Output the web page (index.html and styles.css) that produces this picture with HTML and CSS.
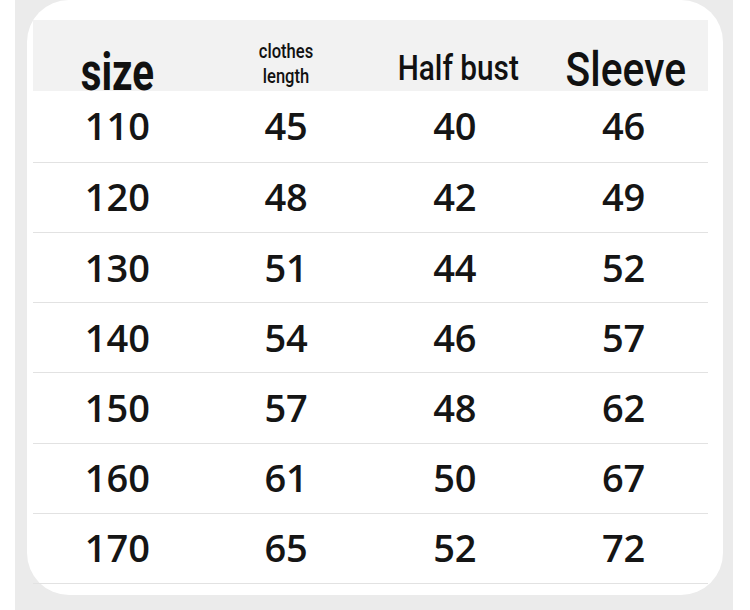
FILE: index.html
```html
<!DOCTYPE html>
<html lang="en">
<head>
<meta charset="utf-8">
<title>Size chart</title>
<link rel="stylesheet" href="styles.css">
</head>
<body>
<div class="panel">
  <div class="card">
    <div class="table">
      <div class="head">
        <div class="hcell hcell-size"><span class="cond bold">size</span></div>
        <div class="hcell hcell-length"><span class="cond med small">clothes<br>length</span></div>
        <div class="hcell hcell-bust"><span class="cond med mid">Half bust</span></div>
        <div class="hcell hcell-sleeve"><span class="cond med big">Sleeve</span></div>
      </div>
      <div class="row"><div>110</div><div>45</div><div>40</div><div>46</div></div>
      <div class="row"><div>120</div><div>48</div><div>42</div><div>49</div></div>
      <div class="row"><div>130</div><div>51</div><div>44</div><div>52</div></div>
      <div class="row"><div>140</div><div>54</div><div>46</div><div>57</div></div>
      <div class="row"><div>150</div><div>57</div><div>48</div><div>62</div></div>
      <div class="row"><div>160</div><div>61</div><div>50</div><div>67</div></div>
      <div class="row"><div>170</div><div>65</div><div>52</div><div>72</div></div>
    </div>
  </div>
</div>
</body>
</html>
```

FILE: styles.css
```css
* { box-sizing: border-box; }
html, body { margin: 0; padding: 0; background: #ffffff; }
body { width: 750px; height: 610px; overflow: hidden; }

.panel {
  margin-left: 15px;
  width: 718px;
  height: 610px;
  background: #ebebeb;
  padding: 0 10px 15px 12px;
}

.card {
  width: 696px;
  height: 595px;
  background: #ffffff;
  border-radius: 42px;
  padding: 20px 15px 0 6px;
}

.table { width: 675px; }

.head {
  height: 71px;
  background: #f2f2f2;
  display: grid;
  grid-template-columns: repeat(4, 1fr);
}

.hcell {
  display: flex;
  justify-content: center;
  align-items: flex-start;
  color: #111111;
  font-family: Roboto, "Liberation Sans", sans-serif;
  text-align: center;
}
.hcell-size { padding-top: 27px; }
.hcell-length { padding-top: 19px; }
.hcell-bust { padding-top: 31px; padding-left: 6px; }
.hcell-sleeve { padding-top: 26px; padding-left: 4px; }

.cond { display: inline-block; white-space: nowrap; }
.bold { font-weight: 700; font-size: 51px; line-height: 51px; transform: scaleX(0.79); }
.med { font-weight: 500; }
.small { font-size: 19.5px; line-height: 25px; transform: scaleX(0.85); }
.mid { font-size: 35px; line-height: 35px; transform: scaleX(0.85); }
.big { font-size: 48px; line-height: 48px; transform: scaleX(0.85); }

.row {
  height: 70.2px;
  padding-bottom: 2px;
  display: grid;
  grid-template-columns: repeat(4, 1fr);
  border-bottom: 1px solid #e2e2e2;
  font-family: "Open Sans", "Noto Sans", sans-serif;
  font-weight: 600;
  font-size: 38px;
  line-height: 38px;
  color: #151515;
}
.head + .row { height: 71.8px; }
.row > div {
  display: flex;
  align-items: center;
  justify-content: center;
}
```
